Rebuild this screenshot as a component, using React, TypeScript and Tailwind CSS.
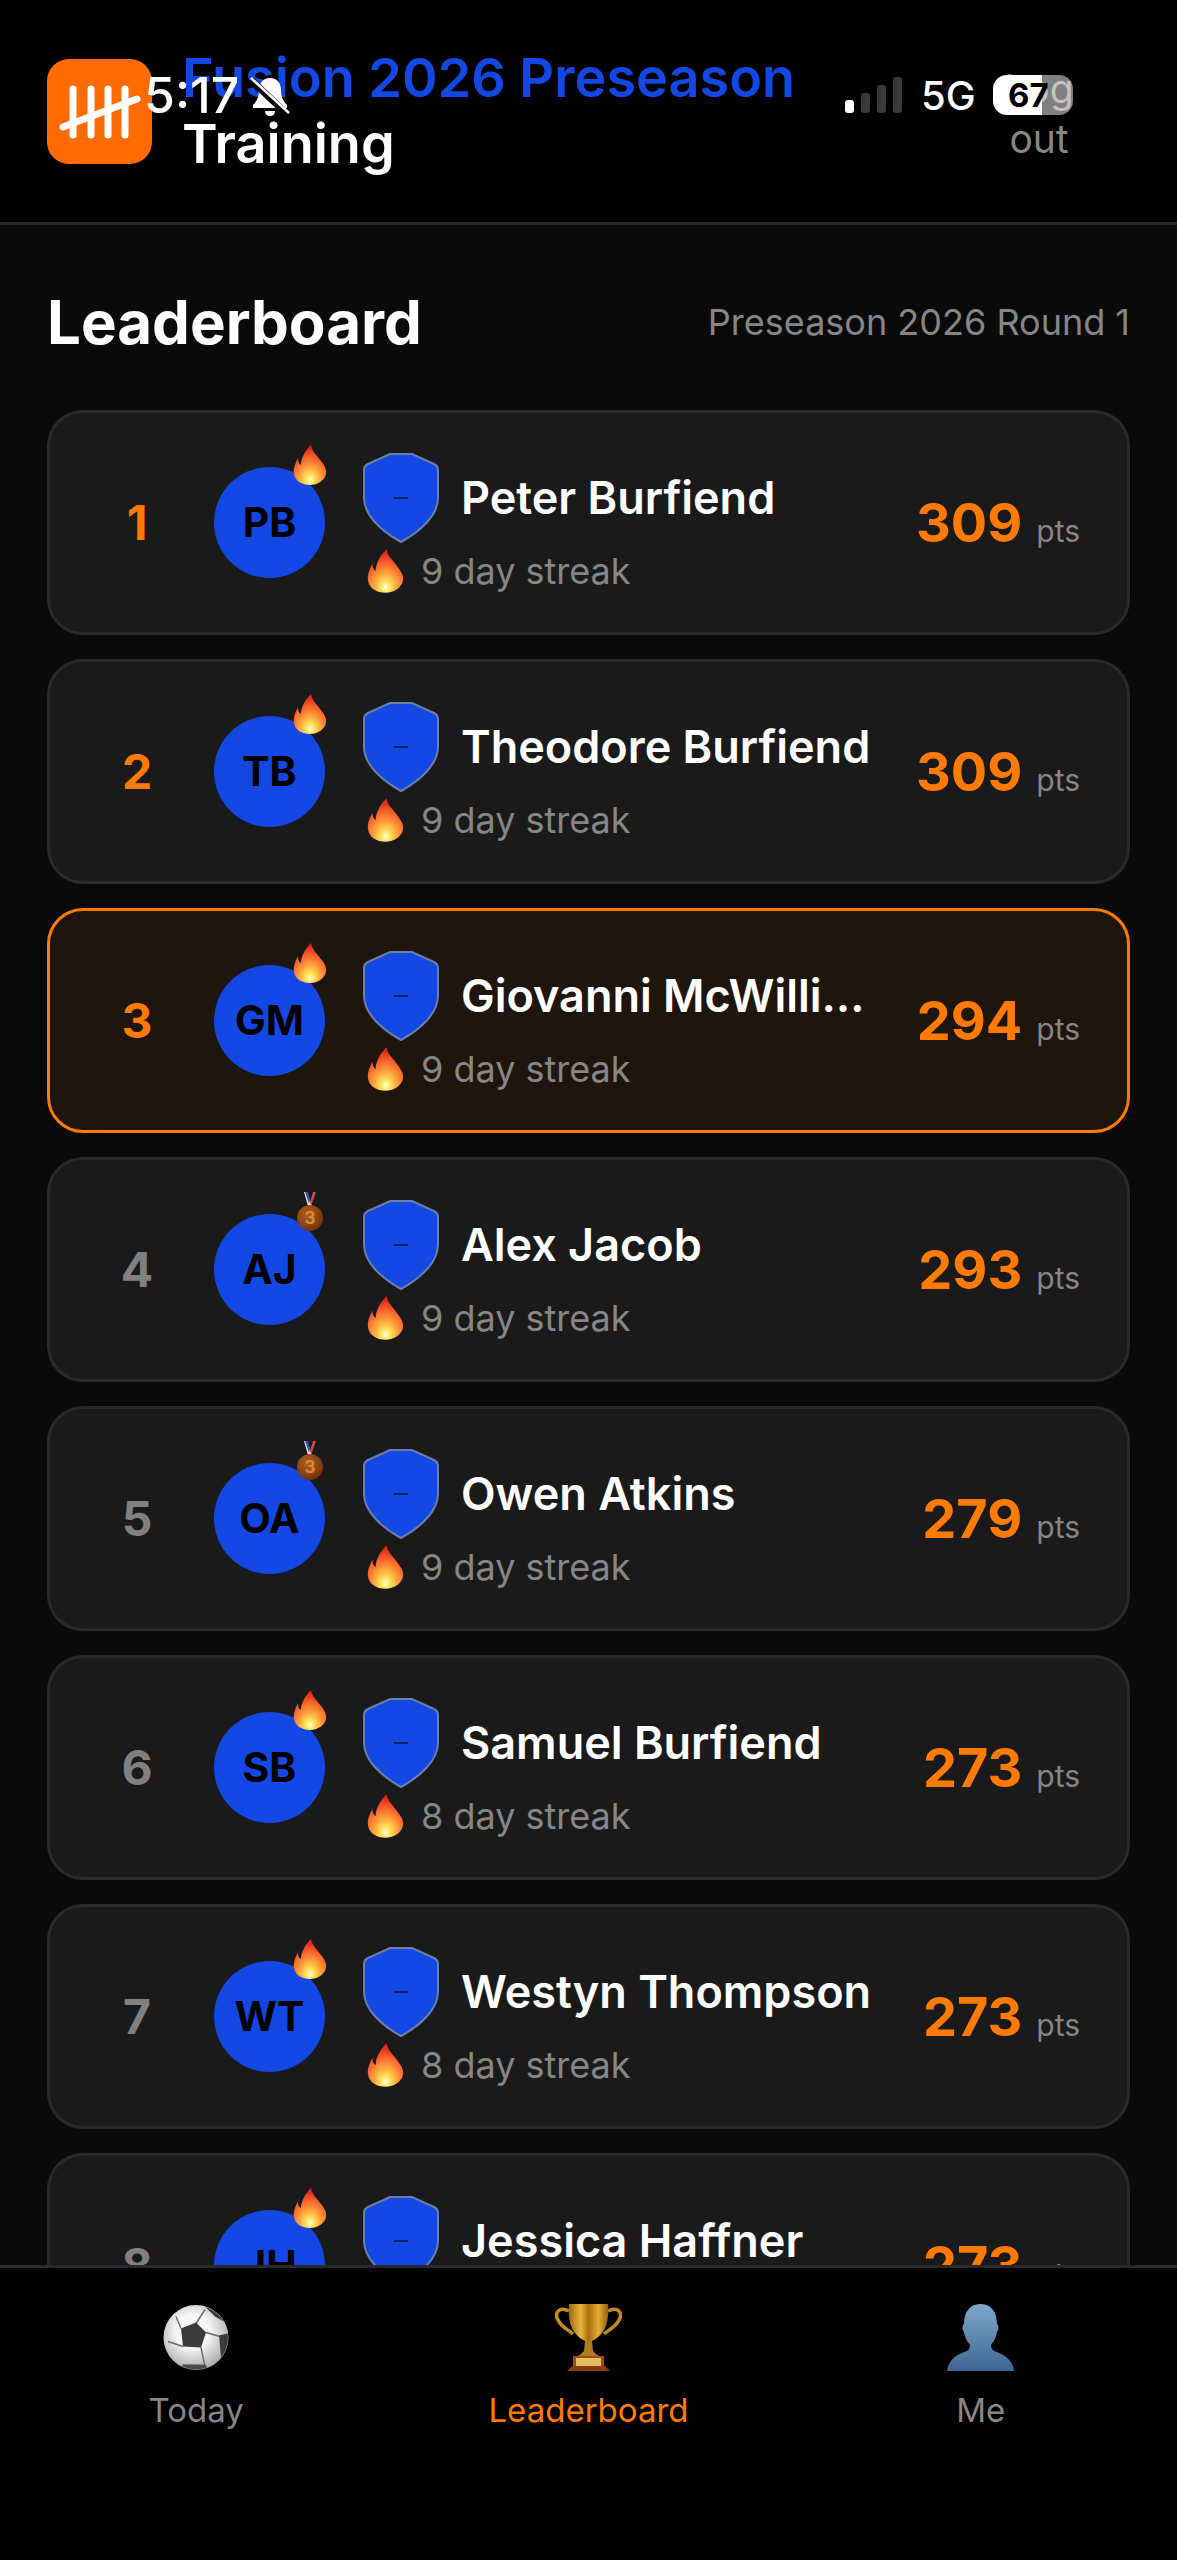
import { ReactNode } from 'react'

type Player = {
  rank: number
  initials: string
  name: string
  streak: number
  points: number
  badge: 'flame' | 'medal'
  me?: boolean
}

const players: Player[] = [
  { rank: 1, initials: 'PB', name: 'Peter Burfiend', streak: 9, points: 309, badge: 'flame' },
  { rank: 2, initials: 'TB', name: 'Theodore Burfiend', streak: 9, points: 309, badge: 'flame' },
  { rank: 3, initials: 'GM', name: 'Giovanni McWilliams', streak: 9, points: 294, badge: 'flame', me: true },
  { rank: 4, initials: 'AJ', name: 'Alex Jacob', streak: 9, points: 293, badge: 'medal' },
  { rank: 5, initials: 'OA', name: 'Owen Atkins', streak: 9, points: 279, badge: 'medal' },
  { rank: 6, initials: 'SB', name: 'Samuel Burfiend', streak: 8, points: 273, badge: 'flame' },
  { rank: 7, initials: 'WT', name: 'Westyn Thompson', streak: 8, points: 273, badge: 'flame' },
  { rank: 8, initials: 'JH', name: 'Jessica Haffner', streak: 8, points: 273, badge: 'flame' },
]

// shared gradients, the svgs below point at these ids
function Gradients() {
  return (
    <svg className="absolute h-0 w-0">
      <defs>
        <radialGradient id="flame" cx="0.5" cy="0.88" r="0.8">
          <stop offset="0" stopColor="#fffde0" />
          <stop offset="0.16" stopColor="#ffe45c" />
          <stop offset="0.42" stopColor="#ffa23a" />
          <stop offset="0.72" stopColor="#f6602a" />
          <stop offset="1" stopColor="#e0281a" />
        </radialGradient>
        <radialGradient id="medal" cx="0.4" cy="0.35" r="0.7">
          <stop offset="0" stopColor="#b5601f" />
          <stop offset="1" stopColor="#6d3208" />
        </radialGradient>
        <radialGradient id="ball" cx="0.45" cy="0.4" r="0.65">
          <stop offset="0.4" stopColor="#f6f6f6" />
          <stop offset="1" stopColor="#a2a2a2" />
        </radialGradient>
        <linearGradient id="cup" x1="0" x2="1" y1="0" y2="0">
          <stop offset="0" stopColor="#9c6510" />
          <stop offset="0.3" stopColor="#eab73f" />
          <stop offset="0.5" stopColor="#a8700f" />
          <stop offset="0.75" stopColor="#e4ad38" />
          <stop offset="1" stopColor="#94600f" />
        </linearGradient>
        <linearGradient id="person" x1="0" x2="0" y1="0" y2="1">
          <stop offset="0" stopColor="#7fa8cb" />
          <stop offset="1" stopColor="#3f6691" />
        </linearGradient>
      </defs>
    </svg>
  )
}

function Flame({ className }: { className: string }) {
  return (
    <svg viewBox="0 0 34 40" className={className}>
      <path
        d="M18 0C19 7 24 10 28 16C32 21 34 25 33 29C32 35 25 40 17 40C9 40 2 36 1 29C0 24 2 19 5 13C5 17 6 19 8 20C8 13 12 6 18 0Z"
        fill="url(#flame)"
      />
    </svg>
  )
}

function Medal({ className }: { className: string }) {
  return (
    <svg viewBox="0 0 26 39" className={className}>
      <path d="M7 0L11 14H15L10 0Z" fill="#e8e8f0" />
      <path d="M8 0L12 12L13 8L11 0Z" fill="#3557b0" />
      <path d="M19 0H16L13 10L14 14Z" fill="#d8454a" />
      <circle cx="13" cy="26" r="13" fill="url(#medal)" />
      <text x="13" y="32" textAnchor="middle" fontSize="17" fontWeight="700" fill="#d98a3c" fontFamily="Inter, sans-serif">
        3
      </text>
    </svg>
  )
}

function Shield() {
  return (
    <svg viewBox="0 0 76 90" className="h-[90px] w-[76px] shrink-0">
      <path
        d="M27 1H49L71 11Q75 13 75 17V45C75 62 58 78 38 89C18 78 1 62 1 45V17Q1 13 5 11Z"
        fill="#1448e4"
        stroke="#6b7fa8"
        strokeWidth="2"
      />
      <rect x="31" y="44" width="14" height="2" fill="#0b1f66" />
    </svg>
  )
}

function Row({ player }: { player: Player }) {
  return (
    <div
      className={`flex h-[225px] shrink-0 items-center rounded-[36px] border-[3px] pl-[45px] pr-[47px] ${
        player.me ? 'border-[#ff7a00] bg-[#1e150c]' : 'border-[#2a2a2a] bg-[#1a1a1a]'
      }`}
    >
      <div className={`w-[84px] text-center text-[48px] font-bold ${player.rank <= 3 ? 'text-[#ff7a00]' : 'text-[#808080]'}`}>
        {player.rank}
      </div>
      <div className="relative ml-[35px] flex h-[111px] w-[111px] shrink-0 items-center justify-center rounded-full bg-[#1448e4] text-[41px] font-bold text-black">
        {player.initials}
        {player.badge === 'flame' ? (
          <Flame className="absolute left-[79px] top-[-22px] h-[40px] w-[34px]" />
        ) : (
          <Medal className="absolute left-[83px] top-[-22px] h-[39px] w-[26px]" />
        )}
      </div>
      <div className="ml-[38px] flex min-w-0 flex-1 flex-col">
        <div className="flex items-center gap-[22px]">
          <Shield />
          <div className="min-w-0 flex-1 truncate text-[45px] font-semibold leading-[56px] text-white">{player.name}</div>
        </div>
        <div className="mt-[6px] flex items-center">
          <Flame className="ml-[4px] h-[44px] w-[37px] shrink-0" />
          <span className="ml-[17px] text-[36px] leading-[44px] text-[#868686]">{player.streak} day streak</span>
        </div>
      </div>
      <div className="ml-[40px] flex shrink-0 items-baseline">
        <span className="text-[54px] font-bold text-[#ff7a00]">{player.points}</span>
        <span className="ml-[14px] text-[30px] text-[#868686]">pts</span>
      </div>
    </div>
  )
}

function Logo() {
  return (
    <div className="h-[105px] w-[105px] shrink-0 rounded-[22px] bg-[#ff6b00]">
      <svg viewBox="0 0 105 105" className="h-full w-full">
        <g stroke="#fff" strokeWidth="7" strokeLinecap="round">
          <path d="M26 30V76M44 30V76M61 30V76M78 30V76" />
          <path d="M16 68L90 40" />
        </g>
      </svg>
    </div>
  )
}

function StatusBar() {
  return (
    <div className="pointer-events-none absolute left-0 top-0 h-[130px] w-full text-white">
      <span className="absolute left-[144px] top-[65px] text-[50px] font-medium leading-[60px]">5:17</span>
      <svg viewBox="0 0 40 40" className="absolute left-[250px] top-[77px] h-[40px] w-[40px]">
        <path d="M20 1C13 1 9 6 9 13C9 21 6 25 3 28V31H37V28C34 25 31 21 31 13C31 6 27 1 20 1Z" fill="#fff" />
        <path d="M15 34H25C25 37 23 39 20 39C17 39 15 37 15 34Z" fill="#fff" />
        <path d="M1 3L38 38" stroke="#000" strokeWidth="7" />
        <path d="M1 1L39 36" stroke="#fff" strokeWidth="2.5" />
      </svg>
      <div className="absolute left-[845px] top-[77px] flex h-[36px] items-end gap-[7px]">
        <div className="h-[13px] w-[9px] rounded-[3px] bg-white" />
        <div className="h-[20px] w-[9px] rounded-[3px] bg-[#3a3a3a]" />
        <div className="h-[28px] w-[9px] rounded-[3px] bg-[#3a3a3a]" />
        <div className="h-[36px] w-[9px] rounded-[3px] bg-[#3a3a3a]" />
      </div>
      <span className="absolute left-[921px] top-[72px] text-[40px] font-medium leading-[48px]">5G</span>
      <div className="absolute left-[993px] top-[75px] flex h-[40px] w-[80px] overflow-hidden rounded-[14px]">
        <div className="h-full w-[49px] bg-white" />
        <div className="h-full flex-1 bg-white/50" />
        <span className="absolute left-[15px] top-0 text-[33px] font-bold leading-[40px] text-black">67</span>
      </div>
    </div>
  )
}

function Ball() {
  return (
    <svg viewBox="0 0 66 66" className="h-[69px] w-[66px]">
      <clipPath id="ball-clip">
        <circle cx="33" cy="33" r="32" />
      </clipPath>
      <circle cx="33" cy="33" r="32.5" fill="url(#ball)" />
      <g clipPath="url(#ball-clip)">
        <g stroke="#6a6a6a" strokeWidth="1.4">
          <path d="M18 24L13 12M33 19L42 5M43 28L57 32M38 43L42 62M20 42L5 37" />
        </g>
        <path d="M18 24L33 18L43 28L38 43L20 42Z" fill="#3b3b3b" />
        <path d="M40 0L66 10V20L52 12Z" fill="#3b3b3b" />
        <path d="M56 31L68 28V50L58 53Z" fill="#3b3b3b" />
        <path d="M20 60L42 60L50 70H14Z" fill="#4a4a4a" />
      </g>
    </svg>
  )
}

function Trophy() {
  return (
    <svg viewBox="0 0 67 69" className="h-[69px] w-[67px]">
      <path d="M14 8C4 3 -1 10 3 17C6 24 14 27 18 31" fill="none" stroke="#c48a1e" strokeWidth="3.5" />
      <path d="M53 8C63 3 68 10 64 17C61 24 53 27 49 31" fill="none" stroke="#c48a1e" strokeWidth="3.5" />
      <path d="M14 1H53C54 14 53 30 37 38H30C14 30 13 14 14 1Z" fill="url(#cup)" />
      <path d="M30 38H37L38 48C40 50 42 52 44 53H23C25 52 27 50 29 48Z" fill="#b07c18" />
      <rect x="18" y="53" width="31" height="11" fill="#a04a14" />
      <rect x="21" y="55" width="25" height="8" fill="#e6bd62" />
      <path d="M12 68L17 63H50L55 68Z" fill="#8a3a10" />
    </svg>
  )
}

function Person() {
  return (
    <svg viewBox="0 0 67 68" className="h-[68px] w-[67px]">
      <path
        d="M33.5 0C45 0 50 9 50 20C52 21 52 26 50 28C49 35 46 38 44 41C44 46 47 47 52 49C60 52 66 58 67 67H0C1 58 7 52 15 49C20 47 23 46 23 41C21 38 18 35 17 28C15 26 15 21 17 20C17 9 22 0 33.5 0Z"
        fill="url(#person)"
      />
    </svg>
  )
}

function Tab({ icon, label, active }: { icon: ReactNode; label: string; active?: boolean }) {
  return (
    <div className="flex flex-col items-center">
      <div className="flex h-[69px] items-center">{icon}</div>
      <span className={`mt-[18px] text-[33px] leading-[40px] ${active ? 'text-[#ff7a00]' : 'text-[#868686]'}`}>{label}</span>
    </div>
  )
}

export default function App() {
  return (
    <div className="relative flex h-[2560px] w-full flex-col overflow-hidden bg-black font-['Inter',sans-serif]">
      <Gradients />
      <header className="flex h-[225px] shrink-0 items-center border-b-[3px] border-[#2a2a2a] bg-black pl-[47px]">
        <Logo />
        <div className="ml-[30px] text-[54px] font-semibold leading-[66px]">
          <div className="text-[#1448e4]">Fusion 2026 Preseason</div>
          <div className="text-white">Training</div>
        </div>
        <button className="ml-auto mr-[96px] mt-[6px] w-[84px] text-center text-[39px] leading-[50px] text-[#868686]">Log out</button>
      </header>

      <main className="min-h-0 flex-1 overflow-hidden bg-[#0a0a0a] px-[47px] pt-[61px]">
        <div className="mb-[52px] flex items-center justify-between">
          <h1 className="text-[60px] font-bold leading-[72px] text-white">Leaderboard</h1>
          <span className="text-[36px] text-[#868686]">Preseason 2026 Round 1</span>
        </div>
        <div className="flex flex-col gap-[24px]">
          {players.map((p) => (
            <Row key={p.rank} player={p} />
          ))}
        </div>
      </main>

      <nav className="grid h-[295px] shrink-0 grid-cols-3 border-t-[3px] border-[#2a2a2a] bg-black pt-[35px]">
        <Tab icon={<Ball />} label="Today" />
        <Tab icon={<Trophy />} label="Leaderboard" active />
        <Tab icon={<Person />} label="Me" />
      </nav>

      <StatusBar />
    </div>
  )
}
